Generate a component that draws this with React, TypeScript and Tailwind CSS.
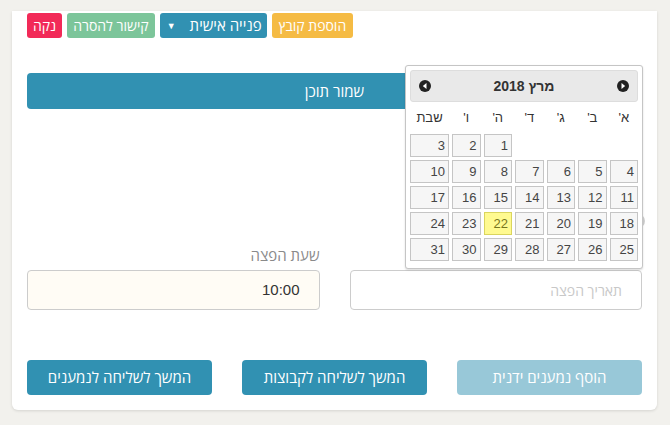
import React from "react";

const heb = { fontFamily: '"Open Sans", "Noto Sans", "Liberation Sans", sans-serif' };
const arial = { fontFamily: '"Liberation Sans", Arial, sans-serif' };

const weeks: (number | null)[][] = [
  [null, null, null, null, 1, 2, 3],
  [4, 5, 6, 7, 8, 9, 10],
  [11, 12, 13, 14, 15, 16, 17],
  [18, 19, 20, 21, 22, 23, 24],
  [25, 26, 27, 28, 29, 30, 31],
];

function Arrow({ dir }: { dir: "l" | "r" }) {
  return (
    <svg width="12" height="12" viewBox="0 0 12 12">
      <circle cx="6" cy="6" r="6" fill="#222" />
      {dir === "l" ? (
        <polygon points="7.5,3 3.8,6 7.5,9" fill="#fff" />
      ) : (
        <polygon points="4.5,3 8.2,6 4.5,9" fill="#fff" />
      )}
    </svg>
  );
}

function DatePicker() {
  return (
    <div
      dir="rtl"
      className="absolute left-[393px] top-[54px] w-[238px] h-[204px] bg-white border border-[#c5c5c5] rounded-[3px] shadow-[0_1px_2px_rgba(0,0,0,0.15)] px-[4px] pt-[4px]"
      style={arial}
    >
      <div className="h-[32px] bg-[#e9e9e9] border border-[#dddddd] rounded-[3px] flex items-center justify-between px-[8px]">
        <Arrow dir="r" />
        <span className="text-[14px] font-bold text-[#333]">מרץ 2018</span>
        <Arrow dir="l" />
      </div>
      <div className="grid grid-cols-[repeat(6,minmax(0,1fr))_39px] gap-x-[3px] w-[228px] mx-auto">
        {["א'", "ב'", "ג'", "ד'", "ה'", "ו'", "שבת"].map((d) => (
          <div key={d} className="h-[32px] flex items-center justify-center text-[13px] text-[#333]">
            {d}
          </div>
        ))}
      </div>
      <div className="grid grid-cols-[repeat(6,minmax(0,1fr))_39px] gap-x-[3px] gap-y-[3px] w-[228px] mx-auto">
        {weeks.flat().map((n, i) =>
          n === null ? (
            <div key={i} className="h-[23px]" />
          ) : (
            <div
              key={i}
              className={
                "h-[23px] border flex items-center justify-start pr-[3px] text-[13px] " +
                (n === 22
                  ? "bg-[#fffa90] border-[#dad55e] text-[#777620]"
                  : "bg-[#f6f6f6] border-[#c5c5c5] text-[#454545]")
              }
            >
              {n}
            </div>
          )
        )}
      </div>
    </div>
  );
}

export default function App() {
  return (
    <div className="w-[670px] h-[425px] bg-[#f2f1ed] pl-[12px] pr-[13px] pt-[11px] overflow-hidden">
      <div
        dir="rtl"
        className="relative bg-white h-[399px] rounded-b-[6px] shadow-[0_1px_3px_rgba(0,0,0,0.12)] px-[15px] pt-[2px] flex flex-col"
        style={heb}
      >
        <div className="flex justify-end gap-[5px] h-[25px]">
          <button className="h-[25px] px-[7px] rounded-[3px] bg-[#f5bb44] text-white text-[14px] leading-none">הוספת קובץ</button>
          <button className="h-[25px] pr-[5px] pl-[7px] rounded-[3px] bg-[#3191b2] text-white text-[15px] leading-none flex items-center gap-[14px]">
            <span>פנייה אישית</span>
            <span className="text-[9px]">▼</span>
          </button>
          <button className="h-[25px] px-[6px] rounded-[3px] bg-[#7cc59a] text-white text-[14px] leading-none">קישור להסרה</button>
          <button className="h-[25px] px-[6px] rounded-[3px] bg-[#f22a58] text-white text-[14px] leading-none">נקה</button>
        </div>

        <button className="mt-[35px] h-[36px] w-full rounded-[4px] bg-[#3191b2] text-white text-[15px]">שמור תוכן</button>

        <div className="h-[136px] flex items-end justify-start pb-[17px]">
          <div className="w-[14px] h-[14px] rounded-full bg-[#cfcfcf] -mr-[3px]" />
        </div>

        <div className="grid grid-cols-2 gap-x-[30px]">
          <div className="flex flex-col">
            <div className="h-[20px]" />
            <div className="h-[40px] mt-[5px] border border-[#cccccc] rounded-[4px] bg-white flex items-center pr-[19px] pl-[12px] text-[14px] text-[#c8c8c8]">
              תאריך הפצה
            </div>
          </div>
          <div className="flex flex-col">
            <div className="h-[20px] text-[15px] text-[#8a8a8a] leading-[20px]">שעת הפצה</div>
            <div className="h-[40px] mt-[5px] border border-[#cccccc] rounded-[4px] bg-[#fffcf5] flex items-center pr-[19px] pl-[12px] text-[15px] text-[#333]" style={arial}>
              10:00
            </div>
          </div>
        </div>

        <div className="grid grid-cols-3 gap-x-[30px] mt-[50px]">
          <button className="h-[35px] rounded-[4px] bg-[#98c8d8] text-white text-[15px]">הוסף נמענים ידנית</button>
          <button className="h-[35px] rounded-[4px] bg-[#3191b2] text-white text-[15px]">המשך לשליחה לקבוצות</button>
          <button className="h-[35px] rounded-[4px] bg-[#3191b2] text-white text-[15px]">המשך לשליחה לנמענים</button>
        </div>

        <DatePicker />
      </div>
    </div>
  );
}
